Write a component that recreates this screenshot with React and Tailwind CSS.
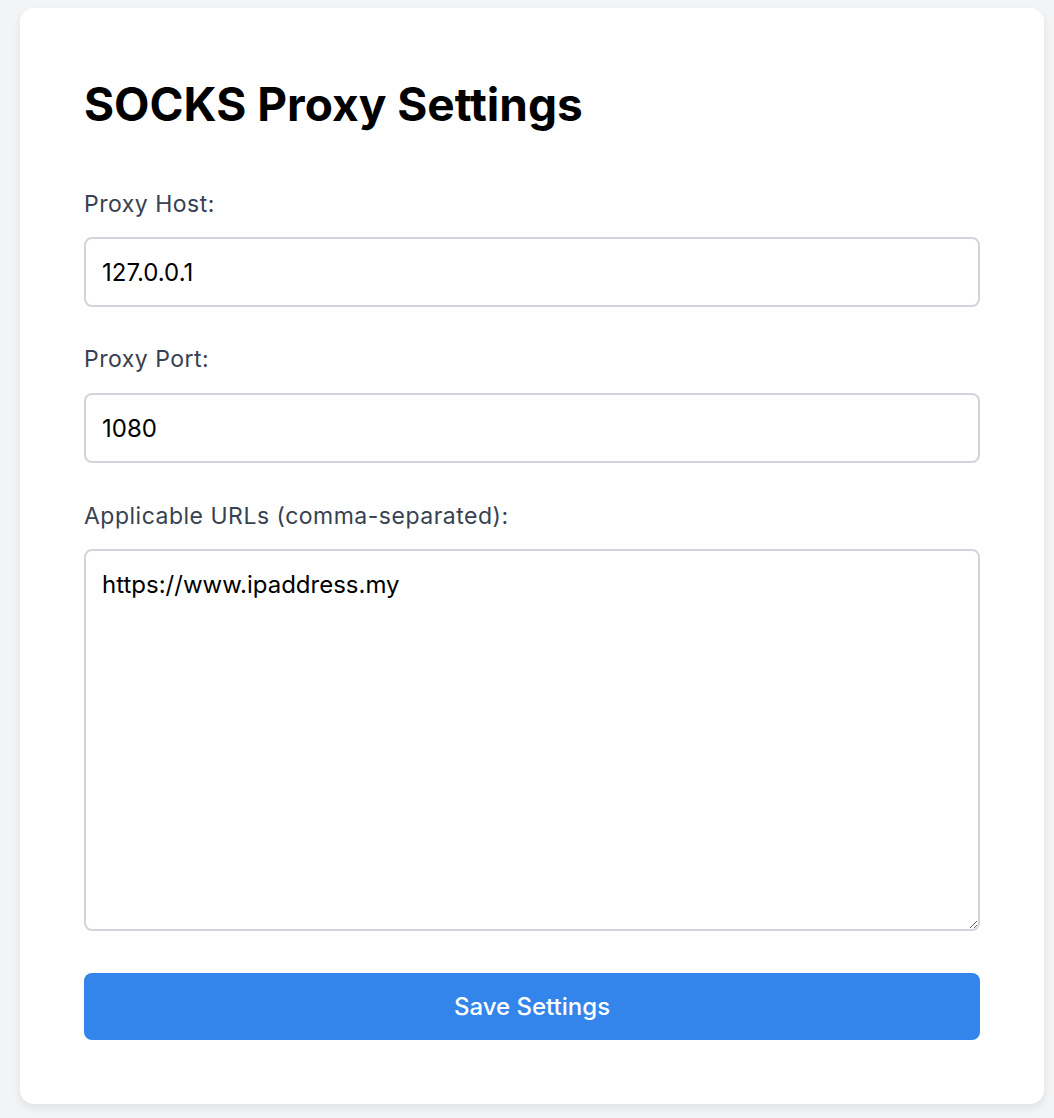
import React from "react";

export default function App() {
  return (
    <div className="min-h-[1118px] bg-[#f3f4f6] pt-[8px] pl-[20px]" style={{ fontFamily: "Inter, 'Noto Sans', sans-serif" }}>
      <div className="w-[1024px] h-[1096px] bg-white rounded-[14px] shadow-[0_4px_10px_rgba(0,0,0,0.08)] px-[64px] pt-[68px]">
        <h1 className="text-[46px] leading-[56px] font-bold text-black tracking-[0px]">SOCKS Proxy Settings</h1>
        <div className="mt-[56px] flex flex-col">
          <label className="text-[23px] leading-[32px] tracking-[0.5px] text-[#374151]">Proxy Host:</label>
          <input
            defaultValue="127.0.0.1"
            className="mt-[17px] h-[70px] w-full rounded-[8px] border-2 border-[#d1d5db] px-[16px] text-[24px] text-black outline-none"
          />
          <label className="mt-[36px] text-[23px] leading-[32px] tracking-[0.5px] text-[#374151]">Proxy Port:</label>
          <input
            defaultValue="1080"
            className="mt-[18px] h-[70px] w-full rounded-[8px] border-2 border-[#d1d5db] px-[16px] text-[24px] text-black outline-none"
          />
          <label className="mt-[37px] text-[23px] leading-[32px] tracking-[0.5px] text-[#374151]">Applicable URLs (comma-separated):</label>
          <textarea
            defaultValue="https://www.ipaddress.my"
            className="mt-[17px] h-[382px] w-full rounded-[8px] border-2 border-[#d1d5db] px-[16px] py-[19px] text-[24px] leading-[30px] text-black outline-none"
          />
          <button className="mt-[42px] h-[67px] w-full rounded-[8px] bg-[#3385eb] text-white text-[24px] font-medium">
            Save Settings
          </button>
        </div>
      </div>
    </div>
  );
}
